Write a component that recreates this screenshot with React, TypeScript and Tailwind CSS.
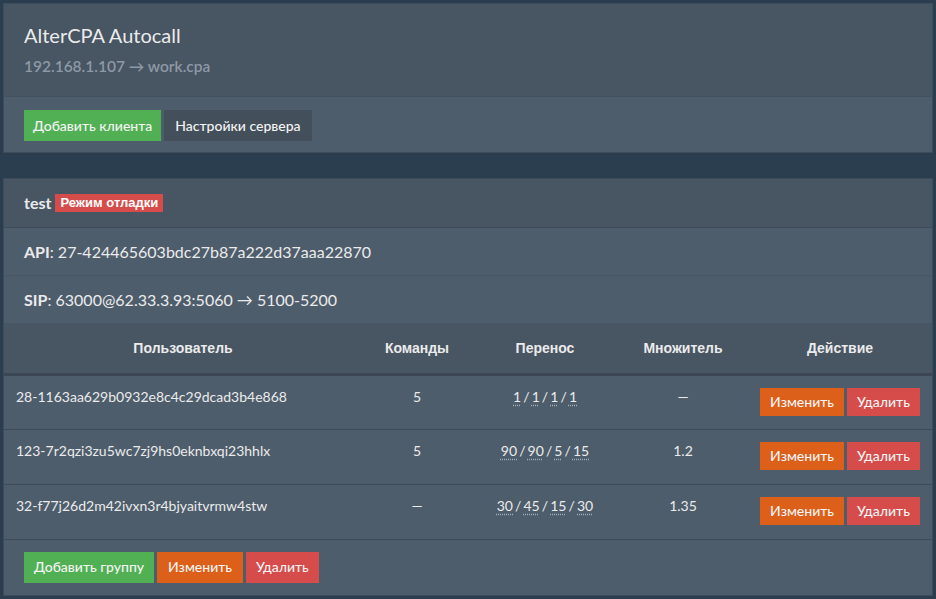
import React from 'react';

const rows = [
  {
    user: '28-1163aa629b0932e8c4c29dcad3b4e868',
    cmd: '5',
    transfer: ['1', '1', '1', '1'],
    mult: '—',
  },
  {
    user: '123-7r2qzi3zu5wc7zj9hs0eknbxqi23hhlx',
    cmd: '5',
    transfer: ['90', '90', '5', '15'],
    mult: '1.2',
  },
  {
    user: '32-f77j26d2m42ivxn3r4bjyaitvrmw4stw',
    cmd: '—',
    transfer: ['30', '45', '15', '30'],
    mult: '1.35',
  },
];

const Btn = ({ color, children }: { color: string; children: React.ReactNode }) => (
  <button className={`h-[31px] px-[10px] text-[14px] font-medium leading-none text-[#f4f4f4] ${color}`}>{children}</button>
);

const arial = { fontFamily: '"Liberation Sans", Arial, sans-serif' };

export default function App() {
  return (
    <div
      className="min-h-[599px] w-[936px] bg-[#2b3e50] px-[3px] pt-[3px] text-[#ebebeb]"
      style={{ fontFamily: 'Lato, "Open Sans", sans-serif' }}
    >
      {/* server panel */}
      <div className="border border-[#3e4b58] bg-[#4e5d6c]">
        <div className="bg-[#485563] px-[20px] pt-[18px] pb-[21px] border-b border-[#445260]">
          <h1 className="text-[20px] leading-[26px]">AlterCPA Autocall</h1>
          <p className="mt-[9px] text-[15.5px] font-semibold leading-[18px] text-[#8d99a5]">192.168.1.107 → work.cpa</p>
        </div>
        <div className="flex gap-[3px] px-[20px] pt-[13px] pb-[11px]">
          <Btn color="bg-[#52b054] !px-[9px]">Добавить клиента</Btn>
          <Btn color="bg-[#434f5b] !px-[11px]">Настройки сервера</Btn>
        </div>
      </div>

      {/* client panel */}
      <div className="mt-[25px] border border-[#3e4b58] bg-[#4e5d6c]">
        <div className="flex h-[49px] items-center gap-[4px] bg-[#485563] px-[20px] border-b border-[#3d4a57]">
          <span className="text-[16px] font-bold">test</span>
          <span className="bg-[#d64c4a] px-[5px] py-[2px] text-[13px] font-bold leading-[14px] text-white" style={arial}>
            Режим отладки
          </span>
        </div>
        <div className="flex h-[48px] items-center px-[20px] text-[16px] border-b border-[#485665]">
          <b>API</b>: 27-424465603bdc27b87a222d37aaa22870
        </div>
        <div className="flex h-[48px] items-center px-[20px] text-[16px] border-b border-[#485665]">
          <b>SIP</b>: 63000@62.33.3.93:5060 → 5100-5200
        </div>

        <table className="w-full table-fixed border-collapse text-[14px]">
          <colgroup>
            <col className="w-[358px]" />
            <col className="w-[110px]" />
            <col className="w-[146px]" />
            <col className="w-[130px]" />
            <col />
          </colgroup>
          <thead>
            <tr className="h-[50px] bg-[#485563] border-b-[3px] border-[#3b4754]" style={arial}>
              <th className="font-bold">Пользователь</th>
              <th className="font-bold">Команды</th>
              <th className="font-bold">Перенос</th>
              <th className="font-bold">Множитель</th>
              <th className="font-bold">Действие</th>
            </tr>
          </thead>
          <tbody>
            {rows.map((r) => (
              <tr key={r.user} className="border-b border-[#3e4a57] align-top">
                <td className="h-[55px] px-[12px] pt-[10px] text-left">{r.user}</td>
                <td className="pt-[10px] text-center">{r.cmd}</td>
                <td className="pt-[10px] text-center [word-spacing:-1.5px]">
                  {r.transfer.map((t, i) => (
                    <React.Fragment key={i}>
                      {i > 0 && ' / '}
                      <span className="underline decoration-dotted decoration-[#a9b2bb] underline-offset-[3px]">{t}</span>
                    </React.Fragment>
                  ))}
                </td>
                <td className="pt-[10px] text-center">{r.mult}</td>
                <td className="pt-[12px]">
                  <div className="flex justify-center gap-[3px]">
                    <button className="h-[28px] px-[10px] text-[14px] font-medium leading-none text-[#f4f4f4] bg-[#dc5f1a]">Изменить</button>
                    <button className="h-[28px] px-[10px] text-[14px] font-medium leading-none text-[#f4f4f4] bg-[#d64c4a]">Удалить</button>
                  </div>
                </td>
              </tr>
            ))}
          </tbody>
        </table>

        <div className="flex gap-[3px] px-[20px] pt-[12px] pb-[12px]">
          <Btn color="bg-[#52b054]">Добавить группу</Btn>
          <Btn color="bg-[#dc5f1a] !px-[11px]">Изменить</Btn>
          <Btn color="bg-[#d64c4a]">Удалить</Btn>
        </div>
      </div>
    </div>
  );
}
